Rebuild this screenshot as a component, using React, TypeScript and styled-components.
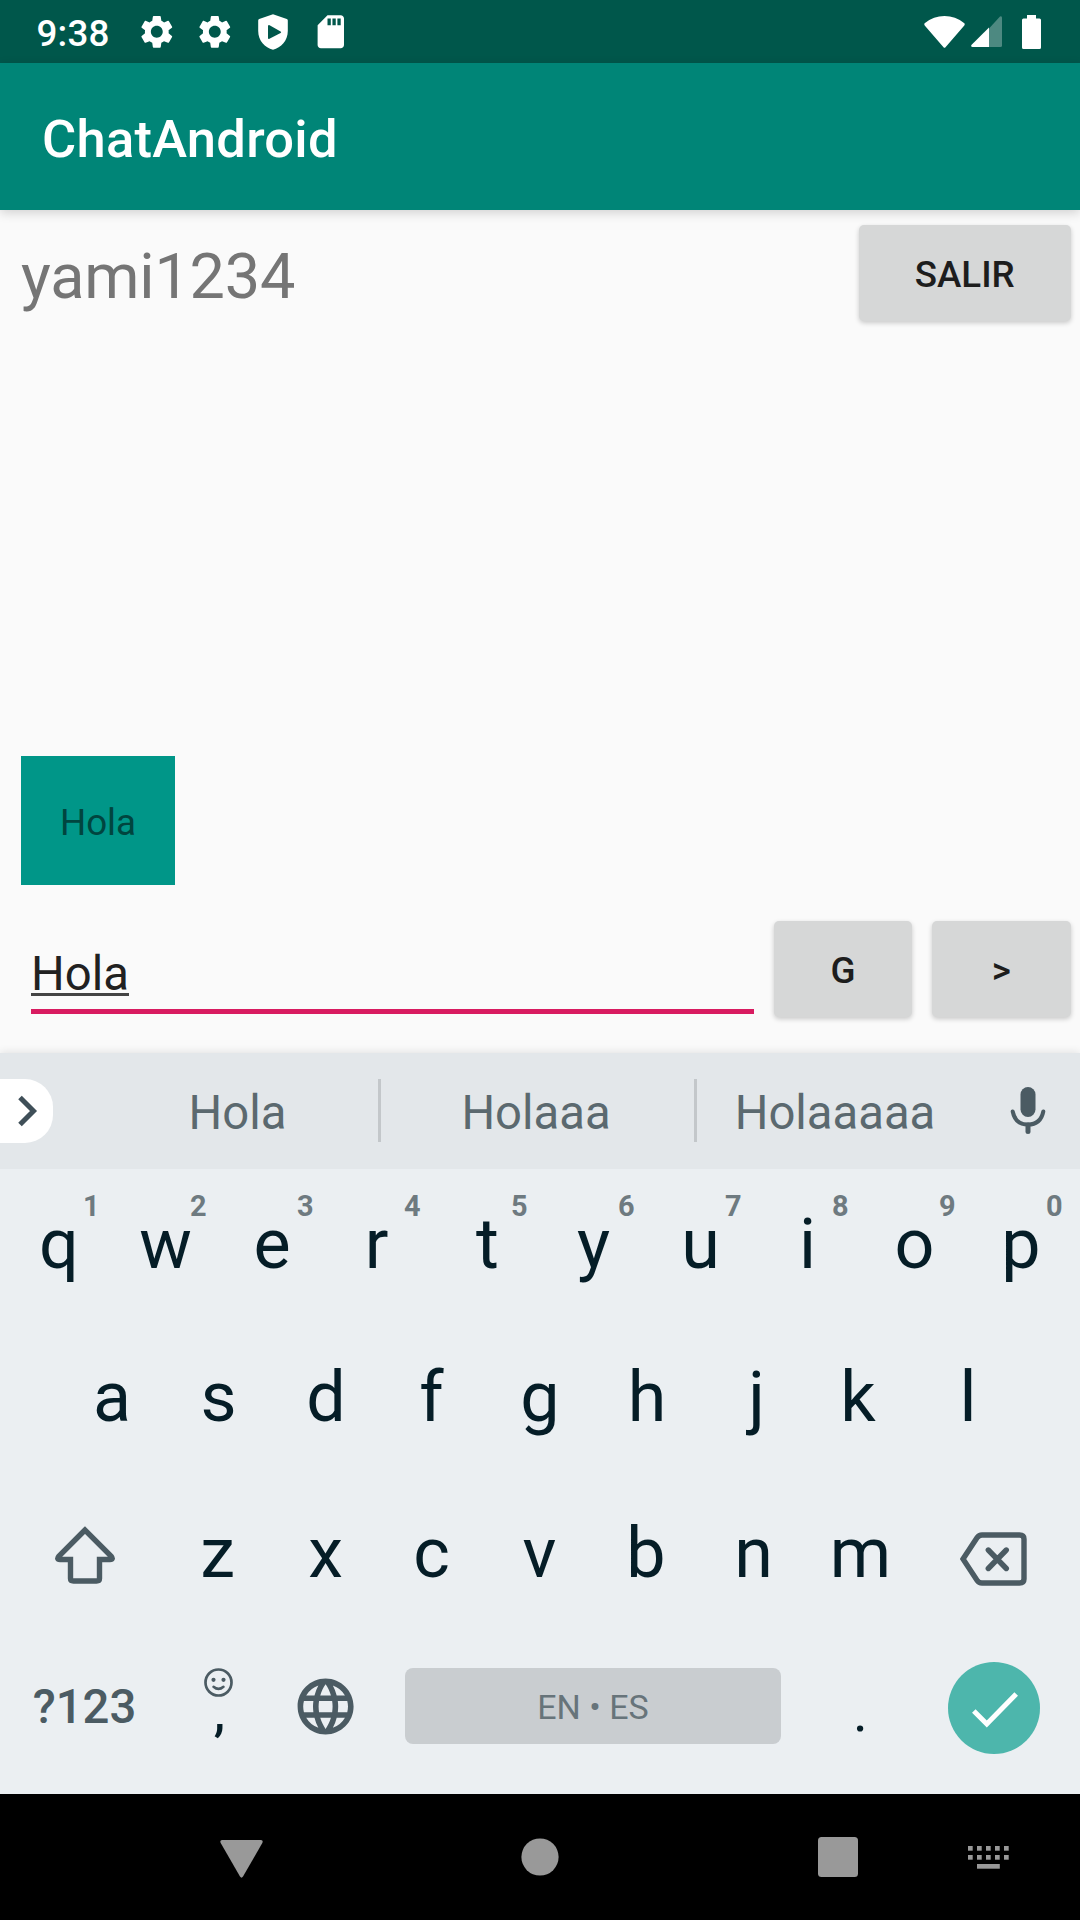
import React from "react";
import styled, { createGlobalStyle } from "styled-components";
import { MdLanguage, MdSdCard, MdSettings } from "react-icons/md";

const GlobalStyle = createGlobalStyle`
  * { box-sizing: border-box; }
  body { margin: 0; background: #fafafa; font-family: Roboto, "Liberation Sans", sans-serif; }
  svg { display: block; flex: none; }
  button { font-family: inherit; border: 0; padding: 0; margin: 0; }
`;

const Screen = styled.div`
  width: 1080px;
  height: 1920px;
  display: flex;
  flex-direction: column;
  overflow: hidden;
  background: #fafafa;
`;

const StatusBar = styled.header`
  height: 63px;
  flex: none;
  display: flex;
  align-items: center;
  justify-content: space-between;
  padding: 0 39px 0 36.5px;
  background: #00574b;
  color: #fff;
`;

const StatusGroup = styled.div<{ $gap: number; $inset?: number }>`
  display: flex;
  align-items: center;
  gap: ${(p) => p.$gap}px;
  padding-left: ${(p) => p.$inset ?? 0}px;
`;

const Clock = styled.span`
  font-size: 36.75px;
  font-weight: 500;
  line-height: 44px;
  letter-spacing: 0.2px;
  padding-top: 4px;
  width: 81.5px;
`;

const AppBar = styled.div`
  height: 147px;
  flex: none;
  display: flex;
  align-items: center;
  padding: 4px 42px 0;
  background: #008577;
  color: #fff;
  box-shadow: 0 3px 10px rgba(0, 0, 0, 0.16);
  z-index: 1;
`;

const Title = styled.h1`
  margin: 0;
  font-size: 52.5px;
  line-height: 62px;
  letter-spacing: 0.25px;
  font-weight: 500;
`;

const UserRow = styled.div`
  height: 126px;
  flex: none;
  display: flex;
  align-items: center;
  justify-content: space-between;
  padding: 0 9.5px 0 21px;
`;

const UserName = styled.span`
  font-size: 63px;
  line-height: 74px;
  letter-spacing: -0.2px;
  padding-top: 8px;
  color: #757575;
`;

const RaisedButton = styled.button<{ $width: number }>`
  width: ${(p) => p.$width}px;
  height: 96px;
  flex: none;
  padding-top: 2px;
  border-radius: 5px;
  background: #d6d7d7;
  color: #1d1d1d;
  font-size: 36.75px;
  font-weight: 500;
  line-height: 43px;
  box-shadow: 0 2px 5px rgba(0, 0, 0, 0.2);
`;

const Chat = styled.main`
  flex: 1;
  display: flex;
  flex-direction: column;
  justify-content: flex-end;
  align-items: flex-start;
  padding: 0 21px;
`;

const Bubble = styled.p`
  margin: 0;
  width: 154px;
  height: 129px;
  padding: 45px 0 0;
  text-align: center;
  background: #009688;
  color: #00453f;
  font-size: 36.75px;
  line-height: 43px;
`;

const Composer = styled.form`
  height: 168px;
  flex: none;
  display: flex;
  align-items: flex-end;
  gap: 19.75px;
  padding: 0 9.5px 36px 31px;
`;

const Field = styled.div`
  flex: 1;
  height: 76px;
  margin-bottom: 3px;
  border-bottom: 5px solid #d81b60;
  font-size: 47.25px;
  line-height: 56px;
  padding-top: 8px;
  color: #212121;
`;

const Composing = styled.span`
  display: inline-block;
  height: 50px;
  border-bottom: 3px solid #444;
`;

const Keyboard = styled.section`
  height: 741px;
  flex: none;
  display: flex;
  flex-direction: column;
  background: #ebeff2;
  box-shadow: 0 -1px 8px rgba(0, 0, 0, 0.1);
`;

const Suggestions = styled.div`
  height: 116px;
  flex: none;
  display: grid;
  grid-template-columns: 97px 281px 3px 313px 3px 276px 107px;
  align-items: center;
  background: #e3e7ea;
`;

const ExpandTab = styled.div`
  width: 53px;
  height: 64px;
  display: flex;
  align-items: center;
  padding-left: 18px;
  border-radius: 0 28px 28px 0;
  background: #fff;
`;

const Suggestion = styled.span<{ $trim?: number }>`
  text-align: center;
  font-size: 47.25px;
  line-height: 56px;
  padding: 4px ${(p) => p.$trim ?? 0}px 0 0;
  color: #5b696f;
`;

const Divider = styled.i`
  height: 63px;
  margin-bottom: 1px;
  background: #c3c7ca;
`;

const MicCell = styled.div`
  display: flex;
  justify-content: center;
  padding-left: 3px;
`;

const Keys = styled.div`
  flex: 1;
  display: grid;
  grid-template-rows: 150px 156px 155px 1fr;
`;

const KeyRow = styled.div`
  display: flex;
  padding-left: 5px;
`;

const Key = styled.div<{ $width?: number; $drop?: number }>`
  position: relative;
  width: ${(p) => p.$width ?? 107}px;
  flex: none;
  display: flex;
  justify-content: center;
  align-items: center;
  padding-top: ${(p) => p.$drop ?? 0}px;
  font-size: 70px;
  line-height: 82px;
  color: #051d27;
`;

const HomeRow = styled(KeyRow)`
  padding-left: 58.5px;
`;

/* Centres a letter on its ink rather than on its advance width. */
const Letter = styled.span<{ $shift: number }>`
  margin-left: ${(p) => p.$shift * 2}px;
`;

const Hint = styled.sup`
  position: absolute;
  top: 20px;
  right: 12.5px;
  font-size: 28.9px;
  line-height: 34px;
  font-weight: 700;
  color: #6e7a80;
`;

const BottomRow = styled(KeyRow)`
  height: 152px;
`;

const SymbolLabel = styled.span`
  font-size: 47.25px;
  line-height: 56px;
  font-weight: 500;
  padding: 2px 1px 0 0;
  color: #4b5b63;
`;

const CommaKey = styled.div`
  width: 107px;
  display: flex;
  flex-direction: column;
  align-items: center;
  padding: 38px 1px 0 0;
  font-size: 51px;
  font-weight: 500;
  line-height: 32px;
  color: #051d27;
`;

const Comma = styled.span`
  padding-left: 3px;
`;

const PeriodKey = styled.div`
  width: 107px;
  padding-top: 41px;
  text-align: center;
  font-size: 56px;
  line-height: 82px;
  color: #051d27;
`;

const SpaceCell = styled.div`
  width: 428px;
  padding: 38px 26px;
`;

const SpaceBar = styled.div`
  height: 76px;
  display: flex;
  justify-content: center;
  padding-top: 19px;
  border-radius: 8px;
  background: #c9cdd0;
  font-size: 34px;
  line-height: 40px;
  color: #67747a;
`;

const EnterKey = styled.div`
  width: 92px;
  height: 92px;
  display: flex;
  align-items: center;
  justify-content: center;
  padding: 3px 0 0 1px;
  margin-right: 1px;
  border-radius: 50%;
  background: #4db6ac;
`;

const NavBar = styled.nav`
  height: 126px;
  flex: none;
  display: grid;
  grid-template-columns: 391px 298px 260px 1fr;
  align-items: center;
  background: #000;
  color: #999;
`;

const NavSlot = styled.div<{ $left: number; $drop?: number }>`
  padding-left: ${(p) => p.$left}px;
  padding-top: ${(p) => p.$drop ?? 0}px;
`;

const ShieldPlay = () => (
  <svg width="30" height="36" viewBox="0 0 30 36">
    <path
      fill="#fff"
      fillRule="evenodd"
      d="M15 .3 28.8 5Q29.8 5.4 29.8 6.5V17C29.8 27 23 33.5 15 35.7 7 33.5.2 27 .2 17V6.5Q.2 5.4 1.2 5ZM10 12.2V24Q10.1 25.4 11.4 24.8L22.6 19Q23.8 18.2 22.6 17.4L11.6 11.2Q10.1 10.7 10 12.2Z"
    />
  </svg>
);

const Wifi = () => (
  <svg width="41" height="32" viewBox="0 0 41 32">
    <path fill="#fff" d="M21.5 31.2Q20.5 32.4 19.5 31.2L.7 9.4Q-.3 8 1 7 9.5 0 20.5 0T40 7Q41.3 8 40.3 9.4Z" />
  </svg>
);

const Signal = () => (
  <svg width="31" height="31" viewBox="0 0 31 31">
    <path fill="#fff" opacity=".3" d="M18 12.5 29 .6Q31-.4 31 2V29.5Q31 31 29.5 31H18Z" />
    <path fill="#fff" d="M.4 29 18 11.5V31H1.5Q-.4 31 .4 29Z" />
  </svg>
);

const Battery = () => (
  <svg width="19" height="34" viewBox="0 0 19 34">
    <path fill="#fff" d="M5 0h9v3.5h3.5Q19 3.5 19 5V32.5Q19 34 17.5 34H1.5Q0 34 0 32.5V5Q0 3.5 1.5 3.5H5Z" />
  </svg>
);

const Chevron = () => (
  <svg width="20" height="32" viewBox="0 0 20 32">
    <path fill="none" stroke="#3f4f58" strokeWidth="5" d="M2 2.5 15.5 16 2 29.5" />
  </svg>
);

const Mic = () => (
  <svg width="36" height="48" viewBox="0 0 36 48">
    <rect x="10.5" y="0" width="15" height="30" rx="7.5" fill="#4b5b63" />
    <path fill="none" stroke="#4b5b63" strokeWidth="4" strokeLinecap="round" d="M2.7 24.5C4.5 33.5 10.5 37.5 18 37.5S31.5 33.5 33.3 24.5" />
    <path stroke="#4b5b63" strokeWidth="5" strokeLinecap="round" d="M18 38V44.5" />
  </svg>
);

const Shift = () => (
  <svg width="60" height="58" viewBox="0 0 60 58">
    <path
      fill="none"
      stroke="#4b5b63"
      strokeWidth="5.4"
      d="M30 4 4 30Q1 33.5 5 33.5H15.5V52.5Q15.500 55 18.5 55H41.5Q44.5 55 44.5 52.5V33.5H55Q59 33.5 56 30Z"
    />
  </svg>
);

const Backspace = () => (
  <svg width="67" height="54" viewBox="0 0 67 54">
    <path
      fill="none"
      stroke="#4b5b63"
      strokeWidth="5.4"
      d="M3 27 17 5.8Q18.9 3 22 3H59.5Q64 3 64 7V47Q64 51 59.5 51H22Q18.9 51 17 48.2Z"
    />
    <path stroke="#4b5b63" strokeWidth="5.4" strokeLinecap="round" d="M28.3 18 46.3 36.5M46.3 18 28.3 36.5" />
  </svg>
);

const Smiley = () => (
  <svg width="29" height="29" viewBox="0 0 29 29">
    <circle cx="14.5" cy="14.5" r="13" fill="none" stroke="#4b5b63" strokeWidth="2.7" />
    <circle cx="9.5" cy="11.8" r="2.1" fill="#4b5b63" />
    <circle cx="19.5" cy="11.8" r="2.1" fill="#4b5b63" />
    <path d="M9.5 18.7Q14.5 23 19.5 18.7" fill="none" stroke="#4b5b63" strokeWidth="2.5" strokeLinecap="round" />
  </svg>
);

const Check = () => (
  <svg width="46" height="36" viewBox="0 0 46 36">
    <path fill="none" stroke="#fff" strokeWidth="5" d="M1.8 19 14.8 32 44.2 2" />
  </svg>
);

const BackTriangle = () => (
  <svg width="43" height="38" viewBox="0 0 43 38">
    <path fill="currentColor" d="M2 0H41Q43.5 .5 42.3 3L23 36.5Q21.5 38.8 20 36.5L.7 3Q-.5 .5 2 0Z" />
  </svg>
);

const HomeCircle = () => (
  <svg width="38" height="38" viewBox="0 0 38 38">
    <circle cx="19" cy="19" r="18.6" fill="currentColor" />
  </svg>
);

const RecentsSquare = () => (
  <svg width="40" height="40" viewBox="0 0 40 40">
    <rect width="40" height="40" rx="3.5" fill="currentColor" />
  </svg>
);

const KeyboardSwitch = () => (
  <svg width="41" height="23" viewBox="0 0 41 23">
    {[0, 9].map((y) =>
      [0, 9, 18, 27, 36].map((x) => (
        <rect key={`${x}-${y}`} x={x} y={y} width="4.7" height="4.7" fill="currentColor" />
      ))
    )}
    <rect x="9" y="18" width="22.8" height="4.7" fill="currentColor" />
  </svg>
);

const topRow = "qwertyuiop".split("");
const homeRow = "asdfghjkl".split("");
const lowerRow = "zxcvbnm".split("");

const inkShift: Record<string, number> = {
  r: -3, t: 1, s: -0.5, f: -1.5, j: 2.5, k: -3, z: -1, c: -1, q: 0.5, b: -0.5, p: -0.5, e: -0.5,
};

const LetterKey = ({ letter, hint }: { letter: string; hint?: number }) => (
  <Key>
    <Letter $shift={inkShift[letter] ?? 0}>{letter}</Letter>
    {hint !== undefined && <Hint>{hint}</Hint>}
  </Key>
);

export default function App() {
  return (
    <>
      <GlobalStyle />
      <Screen>
        <StatusBar>
          <StatusGroup $gap={18.6}>
            <Clock>9:38</Clock>
            <MdSettings size={39.6} />
            <MdSettings size={39.6} />
            <StatusGroup $gap={23} $inset={4.6}>
              <ShieldPlay />
              <MdSdCard size={39.6} />
            </StatusGroup>
          </StatusGroup>
          <StatusGroup $gap={20}>
            <StatusGroup $gap={6}>
              <Wifi />
              <Signal />
            </StatusGroup>
            <Battery />
          </StatusGroup>
        </StatusBar>
        <AppBar>
          <Title>ChatAndroid</Title>
        </AppBar>
        <UserRow>
          <UserName>yami1234</UserName>
          <RaisedButton $width={211.5}>SALIR</RaisedButton>
        </UserRow>
        <Chat>
          <Bubble>Hola</Bubble>
        </Chat>
        <Composer onSubmit={(e) => e.preventDefault()}>
          <Field>
            <Composing>Hola</Composing>
          </Field>
          <RaisedButton type="button" $width={138.5}>G</RaisedButton>
          <RaisedButton type="submit" $width={138.5}>&gt;</RaisedButton>
        </Composer>
        <Keyboard>
          <Suggestions>
            <ExpandTab>
              <Chevron />
            </ExpandTab>
            <Suggestion>Hola</Suggestion>
            <Divider />
            <Suggestion $trim={3}>Holaaa</Suggestion>
            <Divider />
            <Suggestion>Holaaaaa</Suggestion>
            <MicCell>
              <Mic />
            </MicCell>
          </Suggestions>
          <Keys>
            <KeyRow>
              {topRow.map((letter, i) => (
                <LetterKey key={letter} letter={letter} hint={(i + 1) % 10} />
              ))}
            </KeyRow>
            <HomeRow>
              {homeRow.map((letter) => (
                <LetterKey key={letter} letter={letter} />
              ))}
            </HomeRow>
            <KeyRow>
              <Key $width={160} $drop={5}>
                <Shift />
              </Key>
              {lowerRow.map((letter) => (
                <LetterKey key={letter} letter={letter} />
              ))}
              <Key $width={159} $drop={12}>
                <Backspace />
              </Key>
            </KeyRow>
            <BottomRow>
              <Key $width={160}>
                <SymbolLabel>?123</SymbolLabel>
              </Key>
              <CommaKey>
                <Smiley />
                <Comma>,</Comma>
              </CommaKey>
              <Key $drop={1}>
                <MdLanguage size={67.2} color="#4b5b63" />
              </Key>
              <SpaceCell>
                <SpaceBar>EN • ES</SpaceBar>
              </SpaceCell>
              <PeriodKey>.</PeriodKey>
              <Key $width={161} $drop={4}>
                <EnterKey>
                  <Check />
                </EnterKey>
              </Key>
            </BottomRow>
          </Keys>
        </Keyboard>
        <NavBar>
          <NavSlot $left={219.5} $drop={3}>
            <BackTriangle />
          </NavSlot>
          <NavSlot $left={129.5}>
            <HomeCircle />
          </NavSlot>
          <NavSlot $left={129}>
            <RecentsSquare />
          </NavSlot>
          <NavSlot $left={19}>
            <KeyboardSwitch />
          </NavSlot>
        </NavBar>
      </Screen>
    </>
  );
}
